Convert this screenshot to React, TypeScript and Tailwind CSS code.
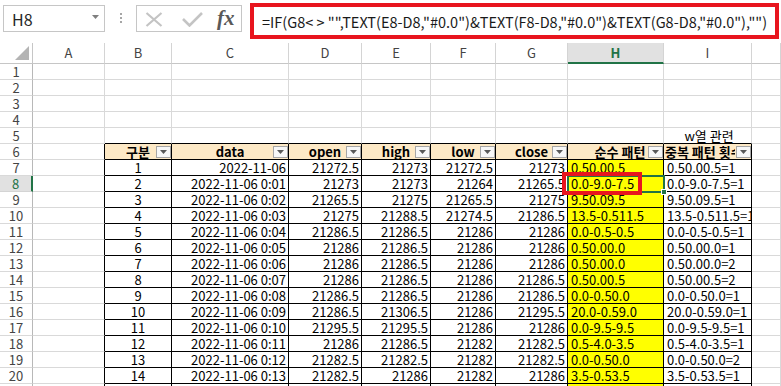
import React from "react";

const colW = [
  "w-[72px]",
  "w-[67px]",
  "w-[117px]",
  "w-[73px]",
  "w-[69px]",
  "w-[65px]",
  "w-[72px]",
  "w-[96px]",
  "w-[88px]",
  "w-[29px]",
];
const letters = ["A", "B", "C", "D", "E", "F", "G", "H", "I", ""];

type Row = [string, string, string, string, string, string, string, string];

const data: Row[] = [
  ["1", "2022-11-06", "21272.5", "21273", "21272.5", "21273", "0.50.00.5", "0.50.00.5=1"],
  ["2", "2022-11-06 0:01", "21273", "21273", "21264", "21265.5", "0.0-9.0-7.5", "0.0-9.0-7.5=1"],
  ["3", "2022-11-06 0:02", "21265.5", "21275", "21265.5", "21275", "9.50.09.5", "9.50.09.5=1"],
  ["4", "2022-11-06 0:03", "21275", "21288.5", "21274.5", "21286.5", "13.5-0.511.5", "13.5-0.511.5=1"],
  ["5", "2022-11-06 0:04", "21286.5", "21286.5", "21286", "21286", "0.0-0.5-0.5", "0.0-0.5-0.5=1"],
  ["6", "2022-11-06 0:05", "21286", "21286.5", "21286", "21286", "0.50.00.0", "0.50.00.0=1"],
  ["7", "2022-11-06 0:06", "21286", "21286.5", "21286", "21286", "0.50.00.0", "0.50.00.0=2"],
  ["8", "2022-11-06 0:07", "21286", "21286.5", "21286", "21286.5", "0.50.00.5", "0.50.00.5=2"],
  ["9", "2022-11-06 0:08", "21286.5", "21286.5", "21286", "21286.5", "0.0-0.50.0", "0.0-0.50.0=1"],
  ["10", "2022-11-06 0:09", "21286.5", "21306.5", "21286", "21295.5", "20.0-0.59.0", "20.0-0.59.0=1"],
  ["11", "2022-11-06 0:10", "21295.5", "21295.5", "21286", "21286", "0.0-9.5-9.5", "0.0-9.5-9.5=1"],
  ["12", "2022-11-06 0:11", "21286", "21286.5", "21282", "21282.5", "0.5-4.0-3.5", "0.5-4.0-3.5=1"],
  ["13", "2022-11-06 0:12", "21282.5", "21282.5", "21282", "21282.5", "0.0-0.50.0", "0.0-0.50.0=2"],
  ["14", "2022-11-06 0:13", "21282.5", "21286", "21282", "21286", "3.5-0.53.5", "3.5-0.53.5=1"],
  ["", "", "", "", "", "", "", ""],
];

const headers = ["구분", "data", "open", "high", "low", "close", "순수 패턴", "중복 패턴 횟수"];

function FilterButton() {
  return (
    <div className="absolute right-0 top-[2px] flex h-[12px] w-[15px] items-center justify-center border border-[#a6a6a6] bg-[#f7f7f7]">
      <svg width="7" height="4" viewBox="0 0 7 4">
        <polygon points="0,0 7,0 3.5,4" fill="#595959" />
      </svg>
    </div>
  );
}

function FormulaBar() {
  return (
    <div className="flex h-[43px] items-start">
      <div className="ml-[3px] mt-[5px] flex h-[27px] w-[102px] items-center justify-between border border-[#c6c6c6] pl-[8px] pr-[5px]">
        <span className="text-[16px] leading-none text-[#262626]">H8</span>
        <svg width="7" height="4" viewBox="0 0 7 4" className="mb-[3px]">
          <polygon points="0,0 7,0 3.5,4" fill="#7f7f7f" />
        </svg>
      </div>
      <div className="ml-[15px] mt-[13px] flex flex-col gap-[2px]">
        <div className="h-[2px] w-[2px] bg-[#a6a6a6]" />
        <div className="h-[2px] w-[2px] bg-[#a6a6a6]" />
        <div className="h-[2px] w-[2px] bg-[#a6a6a6]" />
      </div>
      <div className="ml-[14px] mt-[5px] flex h-[27px] w-[106px] items-center border border-[#c6c6c6] pl-[8px]">
        <svg width="18" height="15" viewBox="0 0 18 15" className="mt-[1px]">
          <path d="M1.5 1 L16.5 14 M16.5 1 L1.5 14" stroke="#c4c4c4" strokeWidth="2.2" fill="none" />
        </svg>
        <svg width="21" height="15" viewBox="0 0 21 15" className="ml-[19px] mt-[1px]">
          <path d="M1 7 L7.5 13.5 L20 1" stroke="#c4c4c4" strokeWidth="2.6" fill="none" />
        </svg>
        <span className="ml-[14px] font-['Liberation_Serif',serif] text-[21px] font-bold italic leading-none text-[#595959]">
          fx
        </span>
      </div>
      <div className="ml-[8px] mt-[3px] flex h-[36px] w-[529px] items-center overflow-hidden border-4 border-[#e8151e] pl-[8px] pt-[2px]">
        <span className="whitespace-nowrap text-[14.5px] leading-none text-[#1a1a1a]">
          {'=IF(G8< > "",TEXT(E8-D8,"#0.0")&TEXT(F8-D8,"#0.0")&TEXT(G8-D8,"#0.0"),"")'}
        </span>
      </div>
    </div>
  );
}

function ColumnHeader() {
  return (
    <div className="flex h-[21px]">
      <div className="relative w-[33px] border-b border-r border-b-[#c6c6c6] border-r-[#c6c6c6]">
        <svg width="14" height="14" viewBox="0 0 14 14" className="absolute bottom-[3px] right-[3px]">
          <polygon points="14,0 14,14 0,14" fill="#b4b4b4" />
        </svg>
      </div>
      {letters.map((l, i) =>
        i === 7 ? (
          <div
            key={i}
            className={`${colW[i]} flex items-center justify-center border-b-2 border-r border-b-[#217346] border-r-[#d4d4d4] bg-[#e1e1e1] pt-[1px] text-[13px] font-semibold text-[#217346]`}
          >
            {l}
          </div>
        ) : (
          <div
            key={i}
            className={`${colW[i]} flex items-center justify-center border-b border-r border-b-[#c6c6c6] border-r-[#d4d4d4] text-[13px] text-[#444]`}
          >
            {l}
          </div>
        )
      )}
    </div>
  );
}

function cellBorder(r: number, c: number) {
  const inTable = r >= 6 && c >= 1 && c <= 8;
  const rightBlack = inTable || (c === 0 && r >= 6);
  const bottomBlack = inTable || (r === 5 && c >= 1 && c <= 8);
  return `${rightBlack ? "border-r-black" : "border-r-[#d9d9d9]"} ${bottomBlack ? "border-b-black" : "border-b-[#d9d9d9]"}`;
}

function CellContent({ r, c }: { r: number; c: number }) {
  if (r === 5 && c === 8) {
    return <div className="flex h-full items-center justify-center pl-[3px] text-[13px] leading-[15px]">w열 관련</div>;
  }
  if (r === 6 && c >= 1 && c <= 8) {
    const label = headers[c - 1];
    if (c === 8) {
      return (
        <>
          <div className="h-full w-[71px] overflow-hidden whitespace-nowrap pl-[1px] text-[13px] font-bold leading-[15px]">
            {label}
          </div>
          <FilterButton />
        </>
      );
    }
    return (
      <>
        <div
          className={`flex h-full items-center justify-center whitespace-nowrap text-[13px] font-bold leading-[15px] ${c === 7 ? "pl-[9px]" : ""}`}
        >
          {label}
        </div>
        <FilterButton />
      </>
    );
  }
  if (r >= 7 && c >= 1 && c <= 8) {
    const row = data[r - 7];
    const v = row[c - 1];
    const align =
      c === 1 ? "text-center" : c >= 2 && c <= 6 ? "text-right pr-[2px]" : "text-left pl-[3px]";
    return <div className={`h-full whitespace-nowrap text-[13px] leading-[15px] ${align}`}>{v}</div>;
  }
  return null;
}

function SheetRow({ r }: { r: number }) {
  const selected = r === 8;
  return (
    <div className="flex h-[16px]">
      <div
        className={
          selected
            ? "flex w-[33px] items-center justify-center border-b border-r-2 border-b-[#d4d4d4] border-r-[#217346] bg-[#e1e1e1] text-[13px] leading-[15px] text-[#217346]"
            : "flex w-[33px] items-center justify-center border-b border-r border-b-[#d9d9d9] border-r-[#b8b8b8] text-[13px] leading-[15px] text-[#444]"
        }
      >
        {r}
      </div>
      {letters.map((_, c) => {
        const header = r === 6 && c >= 1 && c <= 8;
        const yellow = r >= 7 && c === 7;
        const bg = header ? "bg-[#fde9c6]" : yellow ? "bg-[#ffff00]" : "bg-white";
        return (
          <div key={c} className={`relative overflow-hidden border-b border-r ${colW[c]} ${cellBorder(r, c)} ${bg}`}>
            <CellContent r={r} c={c} />
          </div>
        );
      })}
    </div>
  );
}

export default function App() {
  const rows = Array.from({ length: 21 }, (_, i) => i + 1);
  return (
    <div className="relative h-[386px] w-[781px] overflow-hidden bg-white font-['Noto_Sans_CJK_KR',sans-serif] text-black">
      <FormulaBar />
      <ColumnHeader />
      {rows.map((r) => (
        <SheetRow key={r} r={r} />
      ))}
      <div className="absolute left-[567px] top-[175px] h-[18px] w-[98px] border-2 border-[#217346]" />
      <div className="absolute left-[661px] top-[189px] h-[6px] w-[6px] border border-white bg-[#217346]" />
      <div className="absolute left-[562px] top-[172px] h-[23px] w-[80px] border-4 border-[#e8151e]" />
    </div>
  );
}
